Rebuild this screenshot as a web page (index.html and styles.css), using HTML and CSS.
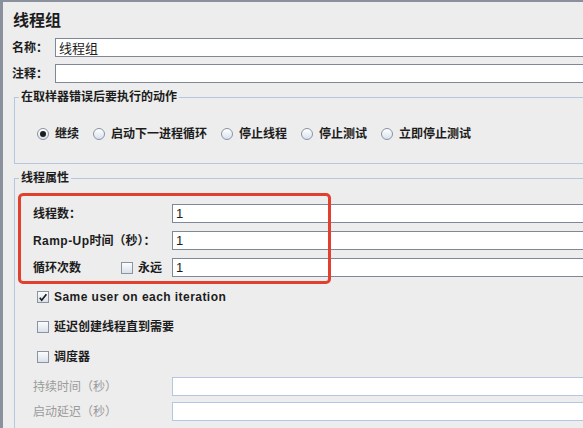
FILE: index.html
```html
<!DOCTYPE html>
<html lang="zh-CN">
<head>
    <meta charset="UTF-8">
    <title>线程组</title>
    <link rel="stylesheet" href="styles.css">
</head>
<body>
    <div class="app">
        <div class="panel">
            <h1 class="title">线程组</h1>

            <div class="field-row">
                <label class="field-label">名称：</label>
                <input class="text-input" type="text" value="线程组">
            </div>
            <div class="field-row second">
                <label class="field-label">注释：</label>
                <input class="text-input" type="text" value="">
            </div>

            <!-- sampler error action -->
            <fieldset class="group error-group">
                <legend>在取样器错误后要执行的动作</legend>
                <div class="radio-row">
                    <span class="radio-item"><span class="radio checked"></span>继续</span>
                    <span class="radio-item"><span class="radio"></span>启动下一进程循环</span>
                    <span class="radio-item"><span class="radio"></span>停止线程</span>
                    <span class="radio-item"><span class="radio"></span>停止测试</span>
                    <span class="radio-item"><span class="radio"></span>立即停止测试</span>
                </div>
            </fieldset>

            <!-- thread properties -->
            <fieldset class="group props-group">
                <legend>线程属性</legend>
                <div class="prop-row">
                    <span class="prop-label">线程数：</span>
                    <input class="text-input" type="text" value="1">
                </div>
                <div class="prop-row">
                    <span class="prop-label"><span class="latin">Ramp-Up</span>时间（秒）：</span>
                    <input class="text-input" type="text" value="1">
                </div>
                <div class="prop-row">
                    <span class="prop-label loop-label">
                        <span>循环次数</span>
                        <span class="check-item forever"><span class="checkbox"></span>永远</span>
                    </span>
                    <input class="text-input" type="text" value="1">
                </div>

                <div class="check-row first">
                    <span class="check-item">
                        <span class="checkbox">
                            <svg width="12" height="12" viewBox="0 0 12 12"><path d="M2.8 6.8 L4.7 9.2 L9.4 3.2" fill="none" stroke="#1b1b1b" stroke-width="1.7"/></svg>
                        </span><span class="latin">Same user on each iteration</span>
                    </span>
                </div>
                <div class="check-row">
                    <span class="check-item"><span class="checkbox"></span>延迟创建线程直到需要</span>
                </div>
                <div class="check-row">
                    <span class="check-item"><span class="checkbox"></span>调度器</span>
                </div>

                <div class="prop-row disabled first-disabled">
                    <span class="prop-label">持续时间（秒）</span>
                    <input class="text-input" type="text" value="" disabled>
                </div>
                <div class="prop-row disabled">
                    <span class="prop-label">启动延迟（秒）</span>
                    <input class="text-input" type="text" value="" disabled>
                </div>
            </fieldset>
        </div>

        <!-- red marker round the thread settings -->
        <div class="highlight"></div>
    </div>
</body>
</html>
```

FILE: styles.css
```css
html, body {
    margin: 0;
    padding: 0;
    overflow: hidden;
}

body {
    width: 583px;
    height: 428px;
    font-family: "Liberation Sans", "Noto Sans CJK SC", sans-serif;
    font-size: 12px;
    color: #1c1c1c;
}

.app {
    position: relative;
    width: 583px;
    height: 428px;
    overflow: hidden;
}

.panel {
    box-sizing: border-box;
    height: 428px;
    background: #ededed;
    border-left: 3px solid #8a919d;
    border-top: 2px solid #8a919d;
    padding-left: 9px;
}

.title {
    margin: 9px 0 0 1px;
    font-size: 16px;
    line-height: 20px;
    font-weight: bold;
}

.latin {
    letter-spacing: 0.45px;
}

.field-row {
    display: flex;
    align-items: center;
    margin-top: 7px;
    height: 19px;
}

.field-label {
    width: 43px;
    font-weight: bold;
    line-height: 16px;
}

.text-input {
    flex: 1;
    min-width: 0;
    box-sizing: border-box;
    height: 19px;
    margin: 0;
    padding: 0 3px;
    border: 1px solid #7f8899;
    border-right: none;
    background: #fff;
    font-family: "Liberation Sans", "Noto Sans CJK SC", sans-serif;
    font-size: 13px;
    color: #1c1c1c;
    outline: none;
}

.group {
    margin: 6px 0 0 2px;
    padding: 0 0 0 4px;
    border: 1px solid #b7c6df;
    border-right: none;
    min-width: 0;
}

.group legend {
    padding: 0 2px;
    font-weight: bold;
    line-height: 16px;
}

.error-group {
    padding-top: 21px;
    padding-bottom: 21px;
}

.radio-row {
    display: flex;
    align-items: center;
    gap: 14px;
    height: 16px;
    padding-left: 18px;
    font-weight: bold;
    white-space: nowrap;
}

.radio-item {
    display: flex;
    align-items: center;
    gap: 6px;
    line-height: 16px;
}

.radio {
    box-sizing: border-box;
    width: 12px;
    height: 12px;
    border-radius: 50%;
    border: 1px solid #8b93a2;
    background: linear-gradient(#ffffff, #d9e1ee);
    display: flex;
    align-items: center;
    justify-content: center;
}

.radio.checked::after {
    content: "";
    width: 6px;
    height: 6px;
    border-radius: 50%;
    background: #1e1e1e;
}

.props-group {
    padding-top: 18px;
    padding-bottom: 7px;
    border-bottom: none;
}

.prop-row {
    display: flex;
    align-items: center;
    height: 19px;
    margin-top: 8px;
    padding-left: 14px;
}

.props-group legend + .prop-row {
    margin-top: 0;
}

.prop-label {
    width: 139px;
    flex-shrink: 0;
    font-weight: bold;
    line-height: 16px;
    white-space: nowrap;
}

.loop-label {
    display: flex;
    align-items: center;
}

.loop-label .forever {
    margin-left: 40px;
}

.check-row {
    display: flex;
    align-items: center;
    height: 16px;
    margin-top: 14px;
    padding-left: 18px;
}

.check-row.first {
    margin-top: 12px;
}

.check-item {
    display: flex;
    align-items: center;
    gap: 5px;
    font-weight: bold;
    line-height: 16px;
    white-space: nowrap;
}

.checkbox {
    box-sizing: border-box;
    width: 12px;
    height: 12px;
    border: 1px solid #8c93a0;
    background: linear-gradient(#fbfcfe, #dbe1ea);
    display: flex;
    align-items: center;
    justify-content: center;
}

.checkbox svg {
    display: block;
    margin: -1px;
}

.prop-row.disabled {
    margin-top: 6px;
}

.prop-row.first-disabled {
    margin-top: 12px;
}

.disabled .prop-label {
    color: #9b9b9b;
    font-weight: normal;
}

.disabled .text-input {
    border-color: #b4c6e2;
}

.highlight {
    position: absolute;
    left: 18px;
    top: 193px;
    width: 313px;
    height: 91px;
    box-sizing: border-box;
    border: 3px solid #e0402d;
    border-radius: 5px;
    pointer-events: none;
}
```
